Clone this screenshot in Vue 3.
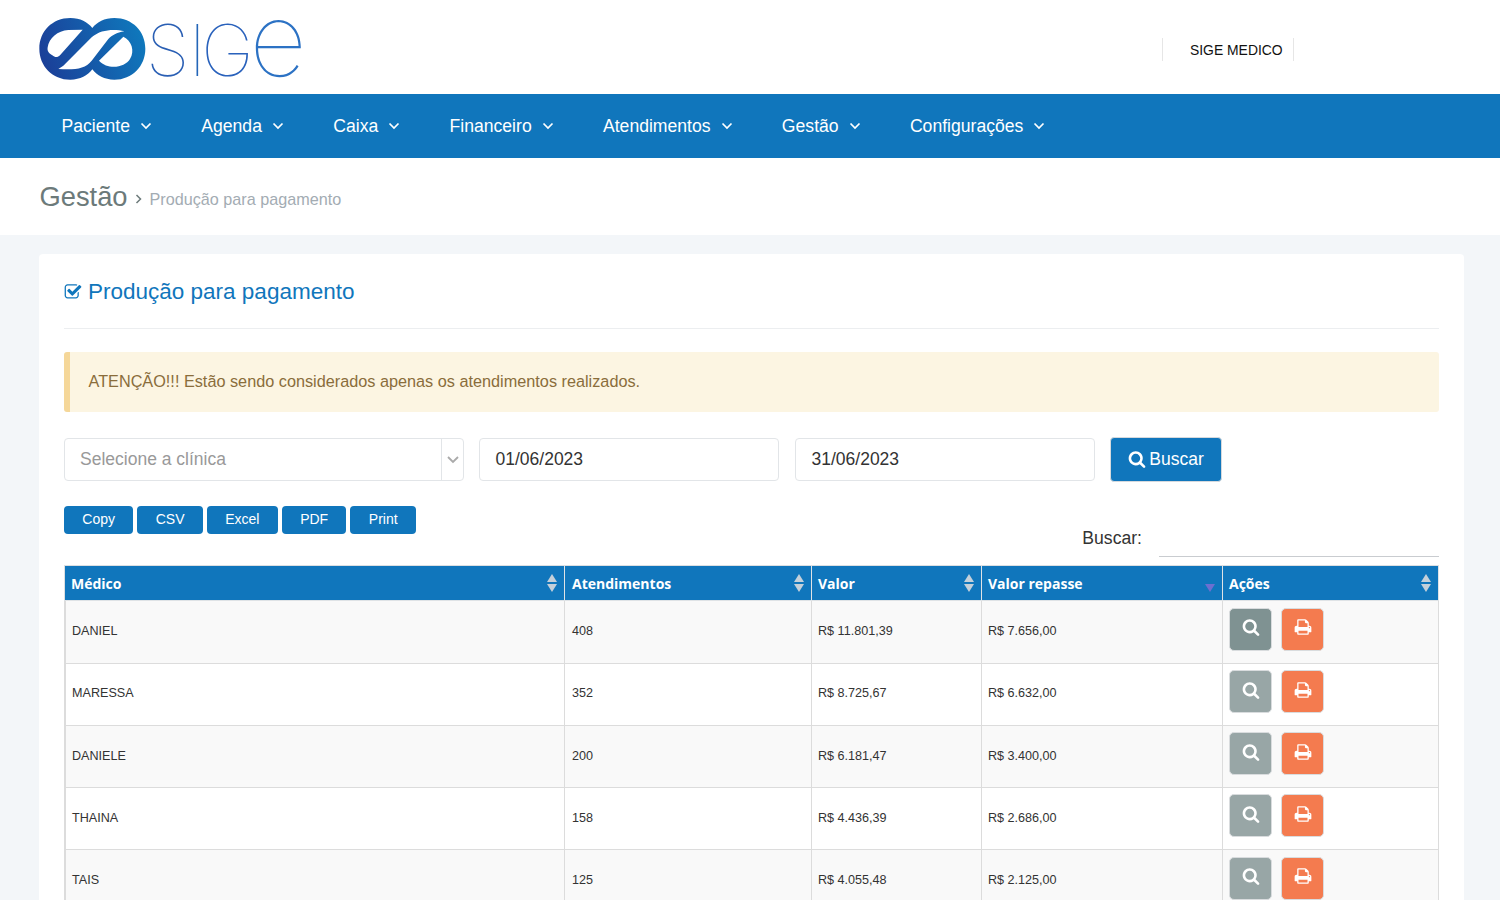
<script setup>
const navItems = ['Paciente', 'Agenda', 'Caixa', 'Financeiro', 'Atendimentos', 'Gestão', 'Configurações']
const exportButtons = ['Copy', 'CSV', 'Excel', 'PDF', 'Print']
const columns = [
  { label: 'Médico', cls: 'c1' },
  { label: 'Atendimentos', cls: 'c2' },
  { label: 'Valor', cls: 'c3' },
  { label: 'Valor repasse', cls: 'c4', sorted: true },
  { label: 'Ações', cls: 'c5' }
]
const rows = [
  { name: 'DANIEL', count: '408', total: 'R$ 11.801,39', pass: 'R$ 7.656,00', dark: true },
  { name: 'MARESSA', count: '352', total: 'R$ 8.725,67', pass: 'R$ 6.632,00' },
  { name: 'DANIELE', count: '200', total: 'R$ 6.181,47', pass: 'R$ 3.400,00' },
  { name: 'THAINA', count: '158', total: 'R$ 4.436,39', pass: 'R$ 2.686,00' },
  { name: 'TAIS', count: '125', total: 'R$ 4.055,48', pass: 'R$ 2.125,00' }
]
const searchPath = 'M1216 832q0-185-131.500-316.500t-316.500-131.500-316.500 131.500-131.500 316.500 131.500 316.500 316.500 131.500 316.500-131.500 131.500-316.500zm512 832q0 52-38 90t-90 38q-54 0-90-38l-343-342q-179 124-399 124-143 0-273.500-55.500t-225-150-150-225-55.500-273.500 55.500-273.500 150-225 225-150 273.500-55.500 273.500 55.500 225 150 150 225 55.500 273.500q0 220-124 399l343 343q37 37 37 90z'
const printPath = 'M448 1536h896v-256h-896v256zm0-640h896v-384h-160q-40 0-68-28t-28-68v-160h-640v640zm1152 64q0-26-19-45t-45-19-45 19-19 45 19 45 45 19 45-19 19-45zm128 0v416q0 13-9.500 22.500t-22.500 9.500h-224v160q0 40-28 68t-68 28h-960q-40 0-68-28t-28-68v-160h-224q-13 0-22.500-9.500t-9.500-22.500v-416q0-79 56.500-135.500t135.500-56.500h64v-544q0-40 28-68t68-28h672q40 0 88 20t76 48l152 152q28 28 48 76t20 88v256h64q79 0 135.500 56.500t56.500 135.500z'
const checkPath = 'M1472 930v318q0 119-84.500 203.500t-203.500 84.500h-832q-119 0-203.500-84.500t-84.500-203.500v-832q0-119 84.500-203.500t203.500-84.500h832q63 0 117 25 15 7 18 23 3 17-9 29l-49 49q-10 10-23 10-3 0-9-2-23-6-45-6h-832q-66 0-113 47t-47 113v832q0 66 47 113t113 47h832q66 0 113-47t47-113v-254q0-13 9-22l64-64q10-10 23-10 6 0 12 3 20 8 20 29zm231-489l-814 814q-24 24-57 24t-57-24l-430-430q-24-24-24-57t24-57l110-110q24-24 57-24t57 24l263 263 647-647q24-24 57-24t57 24l110 110q24 24 24 57t-24 57z'
</script>

<template>
  <div class="page">
    <header class="top">
      <div class="logo">
        <svg class="mark" viewBox="0 0 345 210" width="115" height="70" aria-hidden="true">
          <defs>
            <linearGradient id="lg" x1="0" y1="0.6" x2="1" y2="0.4">
              <stop offset="0" stop-color="#1b3f98" />
              <stop offset="1" stop-color="#0f78bc" />
            </linearGradient>
          </defs>
          <path fill="url(#lg)" d="M106 12C136 12 158 24 172 42C186 24 208 12 238 12C292 12 331 52 331 104C331 156 292 197 238 197C208 197 186 185 172 166C158 185 136 197 106 197C52 197 13 156 13 104C13 52 52 12 106 12Z" />
          <path fill="#fff" d="M38 100C42 72 68 50 100 48L143 47L75 124C68 131 60 131 52 124C42 118 36 112 38 100Z" />
          <path fill="#fff" d="M70 165L85 155L170 70C198 45 240 45 268 52C244 56 232 64 220 75L170 140C150 165 120 168 70 165Z" />
          <path fill="#fff" d="M192 140L265 68C290 80 300 110 285 135C270 160 220 170 192 140Z" />
        </svg>
        <div class="word">
          <span class="l-s">S</span><span class="l-i">I</span><span class="l-g">G</span><span class="l-e">e</span>
        </div>
      </div>
      <div class="clinic">SIGE MEDICO</div>
    </header>

    <nav class="nav">
      <a v-for="item in navItems" :key="item" class="nav-item">
        {{ item }}
        <svg viewBox="0 0 12 8" width="12" height="8" aria-hidden="true">
          <polyline points="1.5,1.5 6,6 10.500,1.500" fill="none" stroke="#fff" stroke-width="1.700" />
        </svg>
      </a>
    </nav>

    <div class="crumbs">
      <span class="crumb-main">Gestão</span>
      <svg class="crumb-sep" viewBox="0 0 8 10" width="8" height="10" aria-hidden="true">
        <polyline points="1.500,1 5.500,5 1.500,9" fill="none" stroke="#6c7a7a" stroke-width="1.500" />
      </svg>
      <span class="crumb-sub">Produção para pagamento</span>
    </div>

    <main class="content">
      <section class="card">
        <h1 class="title">
          <svg viewBox="0 0 1792 1792" width="18" height="18" aria-hidden="true">
            <path :d="checkPath" fill="#1076bc" />
          </svg>
          Produção para pagamento
        </h1>

        <div class="alert">ATENÇÃO!!! Estão sendo considerados apenas os atendimentos realizados.</div>

        <div class="filters">
          <div class="select">
            <span class="select-text">Selecione a clínica</span>
            <span class="select-arrow">
              <svg viewBox="0 0 12 8" width="12" height="8" aria-hidden="true">
                <polyline points="1,1 6,6 11,1" fill="none" stroke="#aaa" stroke-width="1.800" />
              </svg>
            </span>
          </div>
          <div class="date">01/06/2023</div>
          <div class="date second">31/06/2023</div>
          <button class="search-btn">
            <svg viewBox="0 0 1792 1792" width="18" height="18" aria-hidden="true">
              <path :d="searchPath" fill="#fff" />
            </svg>
            Buscar
          </button>
        </div>

        <div class="toolbar">
          <div class="exports">
            <button v-for="b in exportButtons" :key="b" class="export">{{ b }}</button>
          </div>
          <div class="table-search">
            <span>Buscar:</span>
            <div class="table-search-input"></div>
          </div>
        </div>

        <table class="grid">
          <thead>
            <tr>
              <th v-for="col in columns" :key="col.label" :class="col.cls">
                {{ col.label }}
                <svg v-if="col.sorted" class="sort" viewBox="0 0 10 20" width="10" height="20" aria-hidden="true">
                  <polygon points="0,11 10,11 5,19" fill="#6d6fd0" />
                </svg>
                <svg v-else class="sort" viewBox="0 0 10 20" width="10" height="20" aria-hidden="true">
                  <polygon points="5,1 10,9 0,9" fill="#c4d0da" />
                  <polygon points="0,11 10,11 5,19" fill="#c4d0da" />
                </svg>
              </th>
            </tr>
          </thead>
          <tbody>
            <tr v-for="row in rows" :key="row.name">
              <td>{{ row.name }}</td>
              <td>{{ row.count }}</td>
              <td>{{ row.total }}</td>
              <td>{{ row.pass }}</td>
              <td>
                <div class="actions">
                  <button class="act view" :class="{ dark: row.dark }">
                    <svg viewBox="0 0 1792 1792" width="18" height="18" aria-hidden="true">
                      <path :d="searchPath" fill="#fff" />
                    </svg>
                  </button>
                  <button class="act print">
                    <svg viewBox="0 0 1792 1792" width="18" height="18" aria-hidden="true">
                      <path :d="printPath" fill="#fff" />
                    </svg>
                  </button>
                </div>
              </td>
            </tr>
          </tbody>
        </table>
      </section>
    </main>
  </div>
</template>

<style>
html, body { margin: 0; height: 900px; overflow: hidden; background: #f3f6f9; }
</style>

<style scoped>
.page {
  font-family: "Liberation Sans", Arial, sans-serif;
  color: #333;
}
.top {
  height: 94px;
  background: #fff;
  display: flex;
  align-items: center;
  justify-content: space-between;
  padding: 0 206px 0 35px;
}
.logo { display: flex; align-items: center; margin-top: 4px; }
.mark { flex: none; }
.word {
  display: flex;
  align-items: baseline;
  margin-left: -4px;
  margin-top: -8px;
  font-family: Inter, Roboto, sans-serif;
  font-weight: 100;
  font-size: 71px;
  line-height: 90px;
}
.l-s { color: #2a5fb4; }
.l-i { color: #2466b8; margin-left: -1px; }
.l-g { color: #2a62bc; margin-left: -5px; }
.l-e { font-size: 100px; color: #2c72c4; margin-left: -4px; }
.clinic {
  font-size: 13.900px;
  color: #111;
  height: 23px;
  line-height: 25px;
  width: 103px;
  padding-left: 27px;
  border-left: 1px solid #e6e6e6;
  border-right: 1px solid #e6e6e6;
  margin-top: 5px;
  white-space: nowrap;
}
.nav {
  height: 64px;
  background: #1076bc;
  display: flex;
  align-items: center;
  gap: 49.300px;
  padding-left: 61.500px;
}
.nav-item {
  display: flex;
  align-items: center;
  gap: 10px;
  color: #fff;
  font-size: 17.600px;
  white-space: nowrap;
}
.crumbs {
  height: 77px;
  background: #fff;
  display: flex;
  align-items: center;
  padding-left: 39.500px;
}
.crumb-main { font-size: 27.300px; color: #6c7a7a; }
.crumb-sep { margin: 5px 7px 0 7px; }
.crumb-sub { font-size: 16.200px; color: #a3acb3; margin-top: 5px; }
.content { padding: 19px 36px 0 39px; }
.card {
  background: #fff;
  border-radius: 4px;
  padding: 0 25px;
  height: 700px;
}
.title {
  margin: 0;
  box-sizing: border-box;
  height: 75px;
  padding-top: 2px;
  border-bottom: 1px solid #eceef0;
  display: flex;
  align-items: center;
  gap: 6px;
  font-size: 22.500px;
  font-weight: 400;
  color: #1076bc;
}
.alert {
  margin-top: 23px;
  height: 60px;
  box-sizing: border-box;
  border-left: 6px solid #f5d799;
  border-radius: 3px;
  background: #fcf5e2;
  color: #8a6d3b;
  font-size: 16.250px;
  line-height: 58px;
  padding-left: 18.500px;
}
.filters {
  margin-top: 25px;
  display: flex;
  align-items: center;
  height: 45px;
}
.select, .date {
  box-sizing: border-box;
  height: 43px;
  border: 1px solid #e2e5e8;
  border-radius: 4px;
  font-size: 17.500px;
  display: flex;
  align-items: center;
  background: #fff;
}
.select { width: 400px; margin-right: 15px; }
.select-text { flex: 1; padding-left: 15px; color: #999; }
.select-arrow {
  width: 21px;
  height: 100%;
  border-left: 1px solid #e2e5e8;
  display: flex;
  align-items: center;
  justify-content: center;
}
.date { width: 300px; padding-left: 15.500px; color: #333; }
.date.second { margin: 0 15px 0 16px; }
.search-btn {
  box-sizing: border-box;
  width: 112px;
  height: 45px;
  display: flex;
  align-items: center;
  justify-content: center;
  gap: 3px;
  background: #1076bc;
  color: #fff;
  border: 1px solid #d5d9dd;
  border-radius: 4px;
  font: 17.500px "Liberation Sans", Arial, sans-serif;
  padding: 0;
}
.search-btn svg { margin-top: -2px; }
.toolbar {
  margin-top: 24px;
  height: 60px;
  display: flex;
  justify-content: space-between;
  align-items: flex-start;
}
.exports { display: flex; gap: 4px; }
.export {
  height: 28px;
  padding: 0 18.350px 2px;
  border: 0;
  border-radius: 4px;
  background: #1076bc;
  color: #fff;
  font: 14px "Liberation Sans", Arial, sans-serif;
}
.table-search {
  display: flex;
  align-items: center;
  gap: 17px;
  height: 40px;
  margin-top: 11px;
  font-size: 17.600px;
  color: #333;
}
.table-search span { margin-top: 3px; }
.table-search-input {
  width: 280px;
  height: 40px;
  box-sizing: border-box;
  border-bottom: 1px solid #c9ccd0;
}
.grid {
  width: 1375px;
  border-collapse: separate;
  border-spacing: 0;
  table-layout: fixed;
  border-top: 1px solid #dcdfe2;
  margin-top: -1px;
}
th.c1 { width: 501px; }
th.c2 { width: 247px; }
th.c3 { width: 170px; }
th.c4 { width: 241px; }
th.c5 { width: 216px; }
th {
  position: relative;
  box-sizing: border-box;
  height: 35px;
  background: #1076bc;
  color: #fff;
  font: 700 14px "Open Sans", sans-serif;
  text-align: left;
  padding: 0 6px;
  border-right: 1px solid #dfe3e6;
  border-bottom: 1px solid #dfe3e6;
}
th:first-child { border-left: 1px solid #dcdfe2; }
th.c2 { padding-left: 7px; }
.sort { position: absolute; right: 7px; top: 7px; }
td {
  box-sizing: border-box;
  height: 62px;
  font-size: 12.600px;
  color: #333;
  padding: 0 6px 3px;
  border-right: 1px solid #dcdcdc;
  border-bottom: 1px solid #dcdcdc;
}
tbody tr:first-child td { height: 63px; }
tbody tr:nth-child(n+3) td:not(:last-child) { padding-bottom: 1px; }
td:first-child { border-left: 2px solid #dcdcdc; }
td:nth-child(2) { padding-left: 7px; }
tbody tr:nth-child(odd) td { background: #f9f9f9; }
.actions { display: flex; gap: 9px; margin-top: -3px; }
tbody tr:last-child .actions { margin-top: -2px; }
.act {
  box-sizing: border-box;
  width: 43px;
  height: 43px;
  border: 1px solid #d9dcde;
  border-radius: 5px;
  padding: 0 0 4px;
  display: flex;
  align-items: center;
  justify-content: center;
}
.view { background: #98a6a6; }
.view.dark { background: #7f9292; }
.print { background: #f47b4f; }
</style>
